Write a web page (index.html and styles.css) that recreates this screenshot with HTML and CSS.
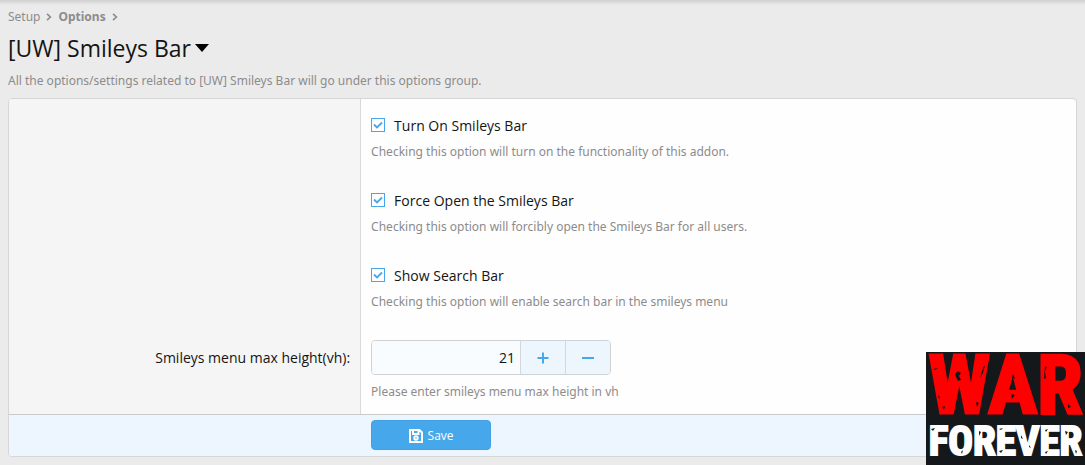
FILE: index.html
```html
<!DOCTYPE html>
<html lang="en">
<head>
<meta charset="utf-8">
<title>[UW] Smileys Bar</title>
<link rel="stylesheet" href="styles.css">
</head>
<body>
<nav class="crumbs" aria-label="Breadcrumb">
  <a href="#">Setup</a>
  <svg class="chevron" viewBox="0 0 6 8"><path d="M1 .8 4.4 4 1 7.2"/></svg>
  <a class="current" href="#">Options</a>
  <svg class="chevron" viewBox="0 0 6 8"><path d="M1 .8 4.4 4 1 7.2"/></svg>
</nav>
<header class="heading">
  <h1 class="title">[UW] Smileys Bar <svg class="caret" viewBox="0 0 14 8"><path d="M0 0h14L7 8z"/></svg></h1>
  <p class="description">All the options/settings related to [UW] Smileys Bar will go under this options group.</p>
</header>
<form class="panel">
  <div class="row">
    <div class="label-cell"></div>
    <div class="field-cell first">
      <label class="choice"><input class="tick" type="checkbox" checked aria-describedby="e1">Turn On Smileys Bar</label>
      <p class="explain" id="e1">Checking this option will turn on the functionality of this addon.</p>
    </div>
  </div>
  <div class="row">
    <div class="label-cell"></div>
    <div class="field-cell">
      <label class="choice"><input class="tick" type="checkbox" checked aria-describedby="e2">Force Open the Smileys Bar</label>
      <p class="explain" id="e2">Checking this option will forcibly open the Smileys Bar for all users.</p>
    </div>
  </div>
  <div class="row">
    <div class="label-cell"></div>
    <div class="field-cell">
      <label class="choice"><input class="tick" type="checkbox" checked aria-describedby="e3">Show Search Bar</label>
      <p class="explain" id="e3">Checking this option will enable search bar in the smileys menu</p>
    </div>
  </div>
  <div class="row">
    <div class="label-cell"><label for="height">Smileys menu max height(vh):</label></div>
    <div class="field-cell number-field">
      <div class="stepper">
        <input class="number" id="height" type="number" value="21">
        <button class="step" type="button" aria-label="Increase"><svg viewBox="0 0 12 12"><path d="M6 .5v11M.5 6h11"/></svg></button>
        <button class="step" type="button" aria-label="Decrease"><svg viewBox="0 0 12 12"><path d="M0 6h12"/></svg></button>
      </div>
      <p class="explain">Please enter smileys menu max height in vh</p>
    </div>
  </div>
  <div class="actions">
    <button class="save" type="submit">
      <svg viewBox="0 0 14 14"><path d="M1 1h9.5L13 3.5V13H1zM4 1v4h5.5V1"/><circle cx="7" cy="9" r="1.7"/></svg>
      Save
    </button>
  </div>
</form>
<aside class="badge">
  <span class="war">WAR</span>
  <span class="forever">FOREVER</span>
  <svg class="grit" viewBox="0 0 159 113"><path d="M7 17l5-1-3 2zM12 43l2 2-1 2zM16 55l3-1-1 4zM29 22l3-3 3 2-2 3 2 4-3 1-2-4zM57 16l2-3-2 8-3 5zM50 50l3 1-2 4zM86 26l1-4 2 5zM85 42l4 1-3 4zM119 14l2 1-2 4 1 7-2 1zM142 52l3 3-3 1zM5 77l4-1-2 3zM33 83l2 3-2 1zM35 100l2-2-1 4zM53 79l2 1-2 4zM73 77l4-1-2 2zM73 99l4-1-2 3zM95 83l2 4-2-1zM103 93l2 3-2-1zM119 78l3-1-2 3zM119 100l3-1-2 3zM139 79l3 1-2 3zM149 98l2 1-1 3z"/></svg>
</aside>
</body>
</html>
```
FILE: styles.css
```css
* { box-sizing: border-box; }

body {
  margin: 0;
  padding: 8px;
  background: linear-gradient(#cfcfcf, #ebebeb 5px) no-repeat #ebebeb;
  color: #141414;
  font: 14px/20px "Open Sans", "Noto Sans", sans-serif;
}

p { margin: 0; }

.crumbs {
  display: flex;
  align-items: center;
  gap: 6px;
  height: 17px;
  font-family: "Noto Sans", sans-serif;
  font-size: 12px;
}
.crumbs a { color: #8c8c8c; text-decoration: none; }
.crumbs .current { font-weight: 700; }
.chevron {
  width: 6px;
  height: 8px;
  fill: none;
  stroke: #8c8c8c;
  stroke-width: 1.6;
}

.heading { padding: 6px 0 7px; }
.title {
  display: flex;
  align-items: center;
  gap: 4px;
  margin: 0;
  font-size: 23px;
  font-weight: 400;
  line-height: 34px;
}
.caret { width: 14px; height: 8px; }
.description {
  padding-top: 6px;
  color: #8c8c8c;
  font-family: "Noto Sans", sans-serif;
  font-size: 12px;
}

.panel {
  border: 1px solid #d4d6d8;
  border-radius: 4px;
  background: #fefefe;
  overflow: hidden;
}
.row { display: flex; }
.label-cell {
  width: 33%;
  padding: 21px 10px;
  border-right: 1px solid #d8d8d8;
  background: #f5f5f5;
  text-align: right;
}
.field-cell { flex: 1; padding: 14px 10px 15px; }
.field-cell.first { padding-top: 17px; }
.choice { display: flex; align-items: center; gap: 9px; }
.explain {
  padding-top: 6px;
  color: #8c8c8c;
  font-family: "Noto Sans", sans-serif;
  font-size: 12px;
}

.tick {
  width: 14px;
  height: 14px;
  margin: 0 0 2px;
  appearance: none;
  border: 1px solid #47a7eb;
  background: url("data:image/svg+xml,%3Csvg xmlns='http://www.w3.org/2000/svg' viewBox='0 0 12 12'%3E%3Cpath d='M2 5.5 5 8.5 10 3.5' fill='none' stroke='%2347a7eb' stroke-width='1.8'/%3E%3C/svg%3E") #fefefe;
}

.number-field { padding: 13px 10px 12px; }
.number-field .explain { padding-top: 7px; }
.stepper {
  display: flex;
  width: 240px;
  height: 35px;
  border: 1px solid #cfd2d5;
  border-radius: 4px;
  overflow: hidden;
}
.number {
  flex: 1;
  min-width: 0;
  padding: 0 5px;
  border: 0;
  background: #f8fcff;
  color: #141414;
  font: inherit;
  text-align: right;
  appearance: textfield;
}
.number::-webkit-inner-spin-button { display: none; }
.step {
  display: flex;
  align-items: center;
  justify-content: center;
  width: 45px;
  padding: 0;
  border: 0;
  border-left: 1px solid #d4d8dc;
  background: #edf6fd;
}
.step svg {
  width: 12px;
  height: 12px;
  stroke: #47a7eb;
  stroke-width: 2;
}

.actions {
  padding: 5px 10px 6px calc(33% + 10px);
  border-top: 1px solid #c8cbce;
  background: #edf6ff;
}
.save {
  display: flex;
  align-items: center;
  justify-content: center;
  gap: 5px;
  width: 120px;
  height: 30px;
  padding: 2px 6px 0;
  border: 1px solid #42a1e6;
  border-radius: 4px;
  background: #47a7eb;
  color: #fefefe;
  font: 12px/20px "Open Sans", "Noto Sans", sans-serif;
}
.save svg {
  width: 14px;
  height: 14px;
  fill: none;
  stroke: #fefefe;
  stroke-width: 2;
}

.badge {
  position: fixed;
  right: 0;
  bottom: 0;
  display: flex;
  flex-direction: column;
  align-items: center;
  width: 159px;
  height: 113px;
  background: #14181b;
  font-family: "Roboto Condensed", Roboto, sans-serif;
  font-weight: 700;
  overflow: hidden;
}
.war {
  color: #fe0000;
  font-size: 82px;
  line-height: 66px;
  -webkit-text-stroke: 3px #fe0000;
}
.forever {
  color: #fefefe;
  font-size: 41px;
  line-height: 47px;
  -webkit-text-stroke: 2px #fefefe;
}
.grit {
  position: absolute;
  inset: 0;
  fill: #14181b;
}
```
